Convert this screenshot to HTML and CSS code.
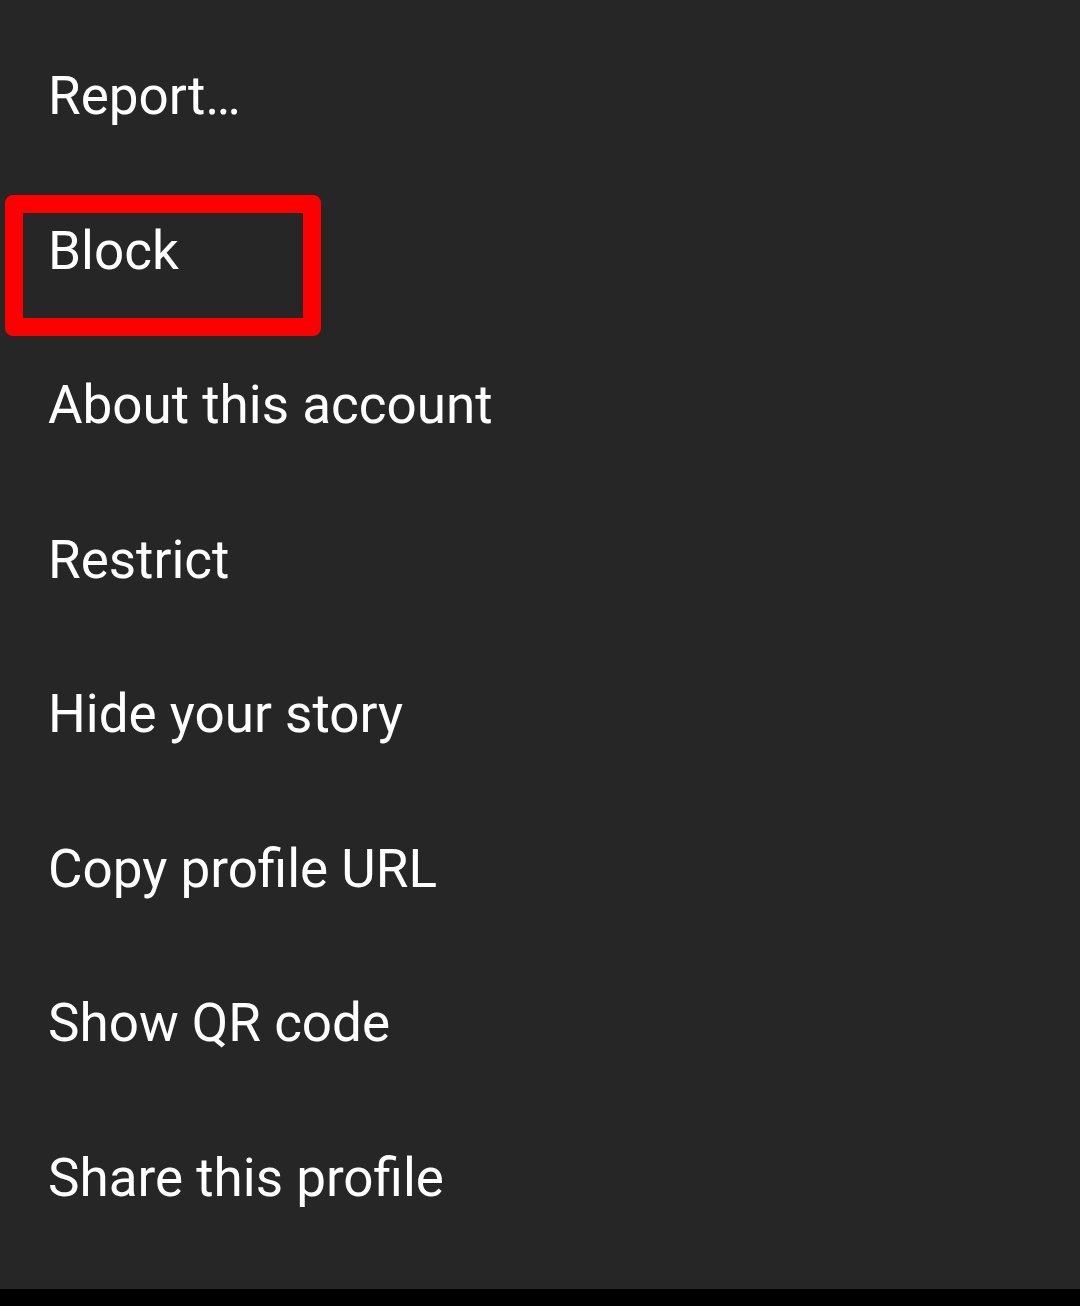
FILE: index.html
```html
<!DOCTYPE html>
<html>
<head>
  <title>Profile options</title>
  <meta name="viewport" content="width=device-width, initial-scale=1">
  <link rel="stylesheet" href="styles.css">
</head>
<body>
  <div class="sheet">
    <ul class="menu">
      <li class="item">Report…</li>
      <li class="item highlight">Block</li>
      <li class="item">About this account</li>
      <li class="item">Restrict</li>
      <li class="item">Hide your story</li>
      <li class="item">Copy profile URL</li>
      <li class="item">Show QR code</li>
      <li class="item">Share this profile</li>
    </ul>
  </div>
  <div class="navbar"></div>
</body>
</html>
```

FILE: styles.css
```css
html, body {
  margin: 0;
  padding: 0;
  background-color: #000;
}
body {
  font-family: Roboto, "Noto Sans", sans-serif;
  width: 1080px;
  height: 1306px;
  overflow: hidden;
}
.sheet {
  background-color: #262626;
  height: 1289px;
  box-sizing: border-box;
  padding-top: 19px;
}
.menu {
  list-style: none;
  margin: 0;
  padding: 0;
}
.item {
  position: relative;
  height: 154.5px;
  line-height: 154.5px;
  padding-left: 48px;
  font-size: 53px;
  color: #fff;
}
.highlight::after {
  content: "";
  position: absolute;
  left: 5px;
  top: 21px;
  width: 280px;
  height: 105px;
  border: 18px solid #ff0000;
  border-radius: 8px;
}
.navbar {
  height: 17px;
  background-color: #000;
}
```
